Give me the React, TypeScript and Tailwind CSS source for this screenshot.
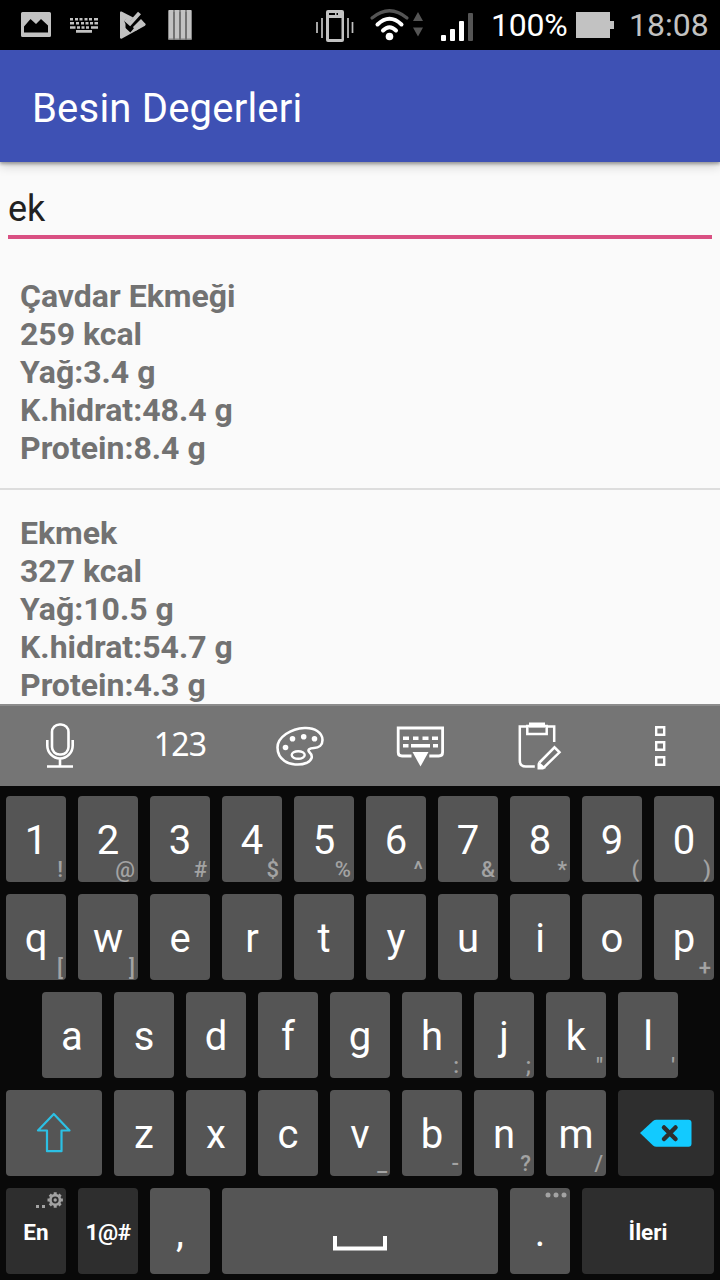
import type { ReactNode } from "react";

type KeyProps = {
  label?: ReactNode;
  hint?: string;
  width?: string;
  dark?: boolean;
  small?: boolean;
  children?: ReactNode;
};

function Key({ label, hint, width = "w-[60px]", dark, small, children }: KeyProps) {
  return (
    <div
      className={`relative flex h-[86px] shrink-0 items-center justify-center rounded-[4px] text-white ${width} ${
        dark ? "bg-[#2e2e2e]" : "bg-[#555555]"
      } ${small ? "text-[22.5px] font-bold" : "pt-[3px] text-[40px]"}`}
    >
      {label && <span className={small ? "pt-[2px] leading-[26px]" : "leading-[48px]"}>{label}</span>}
      {hint && (
        <span className="absolute right-[3px] bottom-0 text-[22px] leading-[25px] font-medium text-[#a3a3a3]">
          {hint}
        </span>
      )}
      {children}
    </div>
  );
}

const digits: [string, string][] = [
  ["1", "!"], ["2", "@"], ["3", "#"], ["4", "$"], ["5", "%"],
  ["6", "^"], ["7", "&"], ["8", "*"], ["9", "("], ["0", ")"],
];
const topRow: [string, string][] = [
  ["q", "["], ["w", "]"], ["e", ""], ["r", ""], ["t", ""],
  ["y", ""], ["u", ""], ["i", ""], ["o", ""], ["p", "+"],
];
const homeRow: [string, string][] = [
  ["a", ""], ["s", ""], ["d", ""], ["f", ""], ["g", ""],
  ["h", ":"], ["j", ";"], ["k", '"'], ["l", "'"],
];
const bottomRow: [string, string][] = [
  ["z", ""], ["x", ""], ["c", ""], ["v", "_"], ["b", "-"], ["n", "?"], ["m", "/"],
];

const foods = [
  { name: "Çavdar Ekmeği", kcal: "259", fat: "3.4", carb: "48.4", protein: "8.4" },
  { name: "Ekmek", kcal: "327", fat: "10.5", carb: "54.7", protein: "4.3" },
];

function StatusBar() {
  return (
    <div className="flex h-[50px] shrink-0 items-center bg-black text-[#c2c2c2]">
      <svg className="h-[50px] w-[200px]" viewBox="0 0 200 50" fill="#c2c2c2">
        <path fillRule="evenodd" d="M22.5 12h27a1.5 1.5 0 0 1 1.5 1.5v22a1.5 1.5 0 0 1-1.5 1.5h-27a1.5 1.5 0 0 1-1.500-1.500v-22a1.500 1.500 0 0 1 1.500-1.500zM24 32.500v-6l6.500-7.500 5.500 5 5-5 7 6.500v7z" />
        <path d="M70 18h3v2.500h-3zM75 18h3v2.500h-3zM79.500 18h3v2.500h-3zM84.500 18h3v2.500h-3zM89 18h3v2.500h-3zM94 18h4v2.500h-4zM70 22h4v2.500h-4zM76 22h3v2.500h-3zM81 22h3v2.500h-3zM85.500 22h3v2.500h-3zM90 22h3v2.500h-3zM94.500 22h3.500v2.500h-3.500zM70 26.200h5.500v2.500h-5.500zM77 26.200h3v2.500h-3zM81.500 26.200h3v2.500h-3zM86 26.200h3v2.500h-3zM91 26.200h7v2.500h-7zM76 30h16v2.700h-16z" />
        <path d="M120 12.500q0-1.500 1.500-1L145 23.500q1.500 1 0 2.200L122 38.500q-2 .8-2-1.200z" />
        <path d="M124 21.500l6 5.500L141 14" fill="none" stroke="#000" strokeWidth="7.500" />
        <path d="M120 15v20l5.500-2v-9l-1.500-3.500z" />
        <path d="M125.500 19.500l4.500 4L139.500 13" fill="none" stroke="#c2c2c2" strokeWidth="4" />
        <path d="M133 27l8-8 4.500 5-10 7z" />
      </svg>
      <svg className="-ml-[34px] h-[50px] w-[34px]" viewBox="166 0 34 50" fill="#c2c2c2">
        <rect x="168" y="10" width="24" height="30" rx="1" fill="#858585" />
        <path d="M169 10h4v28.500h-4zM175 10h4v28.500h-4zM181 10h4v28.500h-4zM187 10h4v28.500h-4z" />
        <path d="M174 12v28M180 12v28M186 12v28" stroke="#555" strokeWidth=".8" />
      </svg>
      <svg className="ml-[110px] h-[50px] w-[170px]" viewBox="310 0 170 50" fill="none">
        <path d="M317 22v11M322 18v20M348 18v20M352.500 22v11" stroke="#c2c2c2" strokeWidth="1.700" />
        <path fill="#c2c2c2" fillRule="evenodd" d="M328 10h14q2 0 2 2v28q0 2-2 2h-14q-2 0-2-2V12q0-2 2-2zM329 13v2h6v-2zM336.500 13v2h1.500v-2zM329 18v21h12.500V18z" />
        <path d="M372 18Q389.500 3.500 407 18" stroke="#555" strokeWidth="3.200" strokeLinecap="round" />
        <path d="M377.500 24.500Q389.500 13 401.500 24.500" stroke="#fff" strokeWidth="4" strokeLinecap="round" />
        <path d="M383 30.500Q389.500 24 396 30.500" stroke="#fff" strokeWidth="4" strokeLinecap="round" />
        <circle cx="389.500" cy="36.500" r="3.800" fill="#fff" />
        <path d="M413 21h10l-5-9zM413 27.500h10l-5 9z" fill="#555" />
        <rect x="441" y="35" width="5" height="6" rx="1" fill="#fff" />
        <rect x="450" y="29" width="5" height="12" rx="1" fill="#fff" />
        <rect x="459" y="21" width="5" height="20" rx="1" fill="#fff" />
        <rect x="468" y="13" width="5" height="28" rx="1" fill="#555" />
      </svg>
      <span className="ml-[11px] w-[85px] pt-[1px] text-[32px] leading-[49px] tracking-[-0.2px] text-white">100%</span>
      <svg className="h-[26px] w-[38px]" viewBox="0 0 38 26" fill="#c2c2c2">
        <path d="M0 0h34v9h4v8h-4v9H0z" />
      </svg>
      <span className="ml-[15px] w-[83px] pt-[1px] text-[32px] leading-[49px]">18:08</span>
    </div>
  );
}

function Toolbar() {
  const cell = "flex h-full w-[120px] items-center justify-center";
  return (
    <div className="flex h-[82px] shrink-0 items-center border-t-2 border-[#8c8c8c] bg-[#757575]">
      <div className={cell}>
        <svg className="h-[50px] w-[36px]" viewBox="42 721 36 50" fill="none" stroke="#fff" strokeWidth="2.600">
          <rect x="52" y="724.500" width="16.500" height="30" rx="7.500" />
          <path d="M47.300 740v5.500a12.700 13 0 0 0 25.400 0V740M60 758.500v8M47 766.500h26" />
        </svg>
      </div>
      <div className={`${cell} pb-[4px] text-white`}>
        <span className="font-['Noto_Sans','Roboto',sans-serif] text-[32px] leading-[40px] tracking-[-0.8px]">123</span>
      </div>
      <div className={cell}>
        <svg className="h-[50px] w-[54px]" viewBox="273 721 54 50" fill="none" stroke="#fff" strokeWidth="2.600">
          <path d="M304.500 728c10-.5 18 4.500 18 12 0 5-3.500 8-8.500 8-4.500.3-7 1.800-4.500 4.200 4 3.800 2.500 8-2.500 10.500-7 3-17 2.200-22.500-1.700-5-3.500-7-8-7-13.500 0-10.500 13.500-19 27-19.500z" />
          <ellipse cx="298.200" cy="755" rx="6.500" ry="3.800" strokeWidth="2.400" />
          <g fill="#fff" stroke="none">
            <circle cx="285.500" cy="747.500" r="2.800" />
            <circle cx="292.500" cy="738.700" r="2.800" />
            <circle cx="303.700" cy="736.700" r="2.800" />
            <circle cx="314.500" cy="738.700" r="2.800" />
          </g>
        </svg>
      </div>
      <div className={cell}>
        <svg className="h-[50px] w-[54px]" viewBox="393 721 54 50" fill="none" stroke="#fff" strokeWidth="2.800">
          <path d="M411.500 756H402q-3.800 0-3.800-3.800V728h44.400v24.200q0 3.800-3.800 3.800h-9.500" />
          <path d="M403 738.200h6M413 738.200h5.500M422.500 738.200h6M432 738.200h6M403 745.800h5.500M411 745.800h19M433 745.800h5" strokeWidth="3.400" />
          <path d="M412.500 752h16l-8 14.500z" fill="#fff" stroke="none" />
        </svg>
      </div>
      <div className={cell}>
        <svg className="h-[50px] w-[50px]" viewBox="515 721 50 50" fill="none" stroke="#fff" strokeWidth="2.500">
          <path d="M527 726.500h-7.200v34q0 6 6 6h9M547 726.500h7.200V742" />
          <path d="M527.300 726h19.400v8h-19.400z" />
          <path d="M529 722.500h16v5h-16z" fill="#fff" stroke="none" />
          <path d="M539.500 762.500l15-15.200 5 5-15.500 15" />
          <path d="M538.500 761.500l7.500 6.500-3 1.500h-5.500v-5.500z" fill="#fff" stroke="none" />
        </svg>
      </div>
      <div className={cell}>
        <svg className="h-[50px] w-[20px]" viewBox="650 721 20 50" fill="none" stroke="#fff" strokeWidth="2.400">
          <path d="M656.200 727.200h8v7.600h-8zM656.200 742.200h8v7.600h-8zM656.200 757.200h8v7.600h-8z" />
        </svg>
      </div>
    </div>
  );
}

function Keyboard() {
  return (
    <div className="flex h-[494px] shrink-0 flex-col gap-[12px] bg-[#090909] px-[6px] pt-[10px]">
      <div className="flex gap-[12px]">
        {digits.map(([k, h]) => <Key key={k} label={k} hint={h} />)}
      </div>
      <div className="flex gap-[12px]">
        {topRow.map(([k, h]) => <Key key={k} label={k} hint={h} />)}
      </div>
      <div className="flex justify-center gap-[12px]">
        {homeRow.map(([k, h]) => <Key key={k} label={k} hint={h} />)}
      </div>
      <div className="flex gap-[12px]">
        <Key width="w-[96px]">
          <svg className="-mt-[4px] h-[44px] w-[40px]" viewBox="34 1111 40 44" fill="none" stroke="#2cc0e4" strokeWidth="2.200" strokeLinejoin="round">
            <path d="M53.800 1114l15.700 16.500h-8v20.700H47v-20.700h-9z" />
          </svg>
        </Key>
        {bottomRow.map(([k, h]) => <Key key={k} label={k} hint={h} />)}
        <Key width="w-[96px]" dark>
          <svg className="-mt-[4px] h-[28px] w-[54px]" viewBox="639 1118.500 54 28">
            <path d="M640 1132.500l13-12q1.500-1.300 3.500-1.300h32q3 0 3 3v21q0 3-3 3h-32q-2 0-3.500-1.300z" fill="#12caff" />
            <path d="M664 1127l11.500 11.500M675.500 1127L664 1138.500" stroke="#2e2e2e" strokeWidth="4.500" strokeLinecap="round" />
          </svg>
        </Key>
      </div>
      <div className="flex gap-[12px]">
        <Key dark small label="En">
          <svg className="absolute top-[3px] right-[2px] h-[18px] w-[30px]" viewBox="34 1191 30 18" fill="none">
            <path d="M36 1205h3v3h-3zM42 1205h3v3h-3z" fill="#a3a3a3" />
            <circle cx="55.200" cy="1200" r="4.800" stroke="#a3a3a3" strokeWidth="2.700" />
            <circle cx="55.200" cy="1200" r="1.700" fill="#a3a3a3" />
            <path d="M55.200 1194.500v-2.200M55.200 1205.500v2.200M49.700 1200h-2.200M60.700 1200h2.200M51.300 1196.100l-1.500-1.500M59.100 1196.100l1.500-1.500M51.300 1203.900l-1.500 1.500M59.100 1203.900l1.500 1.500" stroke="#a3a3a3" strokeWidth="3" />
          </svg>
        </Key>
        <Key dark small label={<span className="tracking-[-0.4px]">1@#</span>} />
        <Key label="," />
        <Key width="w-[276px]">
          <svg className="mt-[21px] h-[15px] w-[54px]" viewBox="0 0 54 15" fill="none" stroke="#fff" strokeWidth="4">
            <path d="M2 0v12.500h50V0" />
          </svg>
        </Key>
        <Key label=".">
          <svg className="absolute top-[4px] right-[3px] h-[6px] w-[22px]" viewBox="0 0 22 6" fill="#a3a3a3">
            <circle cx="3" cy="3" r="2.500" />
            <circle cx="11" cy="3" r="2.500" />
            <circle cx="19" cy="3" r="2.500" />
          </svg>
        </Key>
        <Key width="w-[132px]" dark small label="İleri" />
      </div>
    </div>
  );
}

export default function App() {
  return (
    <div className="flex h-[1280px] w-[720px] flex-col overflow-hidden bg-[#fafafa] font-['Roboto','Noto_Sans',sans-serif]">
      <StatusBar />
      <header className="z-10 flex h-[112px] shrink-0 items-center bg-[#3e51b4] pt-[6px] pl-[32px] shadow-[0_2px_3px_rgba(0,0,0,0.3),0_4px_10px_rgba(0,0,0,0.18)]">
        <h1 className="text-[40px] leading-[48px] tracking-[0.2px] text-white">Besin Degerleri</h1>
      </header>
      <main className="flex h-[542px] shrink-0 flex-col overflow-hidden">
        <div className="mx-[8px] h-[77px] shrink-0 border-b-4 border-[#d95083] pt-[25px]">
          <div className="text-[36px] leading-[44px] text-[#212121]">ek</div>
        </div>
        <div className="mt-[14px] divide-y-2 divide-[#dddddd]">
          {foods.map((f) => (
            <div key={f.name} className="px-[20px] pt-[24px] pb-[21px] text-[32px] leading-[38px] font-bold text-[#727272]">
              <div>{f.name}</div>
              <div>{f.kcal} kcal</div>
              <div>Yağ:{f.fat} g</div>
              <div>K.hidrat:{f.carb} g</div>
              <div>Protein:{f.protein} g</div>
            </div>
          ))}
        </div>
      </main>
      <Toolbar />
      <Keyboard />
    </div>
  );
}
